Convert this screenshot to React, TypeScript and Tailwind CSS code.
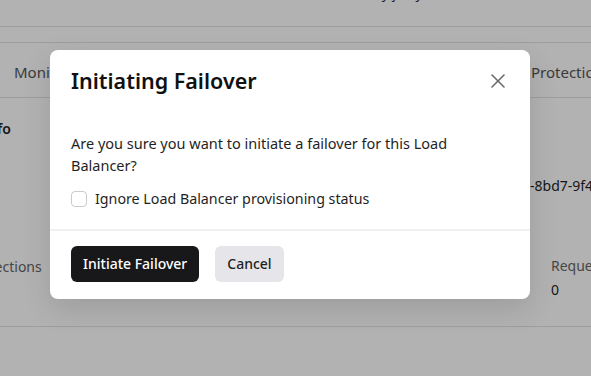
import React, { useState } from 'react';
import { X } from 'lucide-react';

const font = { fontFamily: '"Noto Sans", "Open Sans", sans-serif' };

export default function App() {
  const [ignore, setIgnore] = useState(false);

  return (
    <div className="relative h-[376px] w-[591px] overflow-hidden bg-white text-[#1f1f1f]" style={font}>
      {/* page behind the dialog */}
      <div className="flex h-[26px] items-start justify-center text-sm">
        <span className="-mt-[17px] ml-[150px] text-[#333]">Failover by jerry</span>
      </div>
      <div className="h-[17px] border-y border-[#e2e2e2]" />
      <div className="flex h-[55px] items-center border-b border-[#e2e2e2] pl-[14px] pt-1 text-[15px] text-[#555]">
        <div className="flex flex-1 gap-8">
          <span>Monitoring</span>
          <span>Settings</span>
          <span>Members</span>
          <span>Health Checks</span>
          <span>Listeners</span>
        </div>
        <span className="w-[60px] shrink-0 whitespace-nowrap">Protection</span>
      </div>
      <div className="grid h-[229px] grid-cols-[530px_1fr] border-b border-[#e2e2e2]">
        <div className="flex flex-col">
          <span className="-ml-[56px] mt-[21px] text-sm font-semibold">Basic Info</span>
          <span className="-ml-[40px] mt-[118px] text-sm text-[#666]">Connections</span>
        </div>
        <div className="flex flex-col">
          <span className="mt-[78px] text-sm">-8bd7-9f44</span>
          <span className="ml-[21px] mt-[60px] text-sm text-[#666]">Requests</span>
          <span className="ml-[21px] mt-[4px] text-sm">0</span>
        </div>
      </div>

      {/* overlay */}
      <div className="absolute inset-0 bg-black/30" />

      {/* dialog */}
      <div className="absolute left-[50px] top-[50px] w-[480px] rounded-lg bg-white shadow-[0_10px_30px_rgba(0,0,0,0.12)]">
        <div className="flex items-center justify-between pl-[21px] pr-[20px] pt-[17px]">
          <h2 className="text-[21.5px] leading-7 font-semibold text-[#111]">Initiating Failover</h2>
          <button className="text-[#6b6b6b]">
            <X size={24} strokeWidth={1.6} />
          </button>
        </div>
        <div className="px-[21px] pt-[37px] pb-[19px] text-[14.5px] leading-[22px] text-[#1f1f1f]">
          <p>Are you sure you want to initiate a failover for this Load Balancer?</p>
          <label className="mt-[12px] flex items-center gap-2 text-[14.25px]">
            <input
              type="checkbox"
              checked={ignore}
              onChange={e => setIgnore(e.target.checked)}
              className="h-4 w-4 appearance-none rounded border border-[#c9c9cf] bg-white"
            />
            <span>Ignore Load Balancer provisioning status</span>
          </label>
        </div>
        <div className="flex gap-4 border-t-2 border-[#f0f0f3] px-[21px] pt-[15px] pb-[17px]">
          <button className="h-9 rounded-md bg-[#18181b] px-3 text-sm font-medium text-white">Initiate Failover</button>
          <button className="h-9 rounded-md bg-[#e6e6ea] px-3 text-sm font-medium text-[#1f1f1f]">Cancel</button>
        </div>
      </div>
    </div>
  );
}
